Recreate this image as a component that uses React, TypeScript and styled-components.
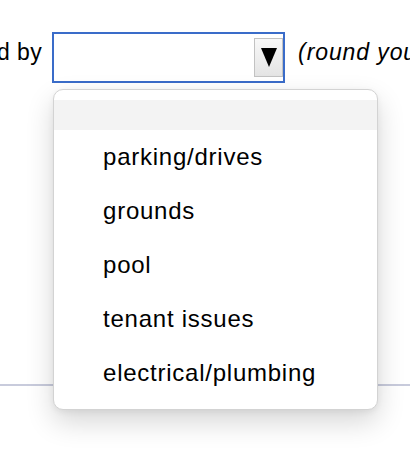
import styled, { createGlobalStyle } from 'styled-components';

const GlobalStyle = createGlobalStyle`
  html, body {
    margin: 0;
    padding: 0;
    background: #ffffff;
    overflow: hidden;
  }
  body {
    font-family: 'Liberation Sans', Arial, Helvetica, sans-serif;
    color: #000000;
  }
`;

const Page = styled.div`
  width: 410px;
  height: 468px;
  overflow: hidden;
  padding-top: 32px;
  box-sizing: border-box;
`;

const FieldRow = styled.div`
  display: flex;
  align-items: flex-start;
  white-space: nowrap;
`;

const Label = styled.span`
  font-size: 23px;
  line-height: 25px;
  letter-spacing: 0.4px;
  margin: 8px 0 0 -3px;
`;

const SelectWrap = styled.div`
  position: relative;
  margin-left: 10px;
`;

const SelectBox = styled.div`
  width: 233px;
  height: 51px;
  box-sizing: border-box;
  border: 2px solid #3a6cc9;
  display: flex;
  align-items: center;
  justify-content: flex-end;
`;

const ArrowButton = styled.div`
  width: 29px;
  height: 39px;
  box-sizing: border-box;
  border: 1px solid #c2c2c2;
  background: linear-gradient(#f8f8f8, #e4e4e4);
  display: flex;
  align-items: center;
  justify-content: center;
`;

const Hint = styled.span`
  font-size: 23px;
  line-height: 25px;
  letter-spacing: 0.9px;
  font-style: italic;
  margin: 8px 0 0 13px;
`;

const Menu = styled.ul`
  position: absolute;
  top: 57px;
  left: 1px;
  width: 325px;
  margin: 0;
  padding: 10px 0 9px;
  list-style: none;
  box-sizing: border-box;
  background: #ffffff;
  border: 1px solid #d3d3d3;
  border-radius: 10px;
  box-shadow: 0 12px 28px rgba(0, 0, 0, 0.16), 0 2px 6px rgba(0, 0, 0, 0.06);
  z-index: 2;
`;

const Option = styled.li<{ $highlighted?: boolean; $blank?: boolean }>`
  height: ${(p) => (p.$blank ? '30px' : '54px')};
  line-height: ${(p) => (p.$blank ? '30px' : '54px')};
  padding-left: 49px;
  font-size: 24px;
  letter-spacing: 0.75px;
  background: ${(p) => (p.$highlighted ? '#f3f3f3' : 'transparent')};
`;

const Rule = styled.hr`
  margin: 301px 0 0;
  border: none;
  height: 2px;
  background: #c8cbdc;
`;

const options = [
  'parking/drives',
  'grounds',
  'pool',
  'tenant issues',
  'electrical/plumbing',
];

export default function App() {
  return (
    <>
      <GlobalStyle />
      <Page>
        <FieldRow>
          <Label>d by</Label>
          <SelectWrap>
            <SelectBox>
              <ArrowButton>
                <svg width="16" height="19" viewBox="0 0 16 19">
                  <polygon points="0,0 16,0 8,19" fill="#000" />
                </svg>
              </ArrowButton>
            </SelectBox>
            <Menu>
              <Option $blank $highlighted />
              {options.map((o) => (
                <Option key={o}>{o}</Option>
              ))}
            </Menu>
          </SelectWrap>
          <Hint>(round your answer)</Hint>
        </FieldRow>
        <Rule />
      </Page>
    </>
  );
}
